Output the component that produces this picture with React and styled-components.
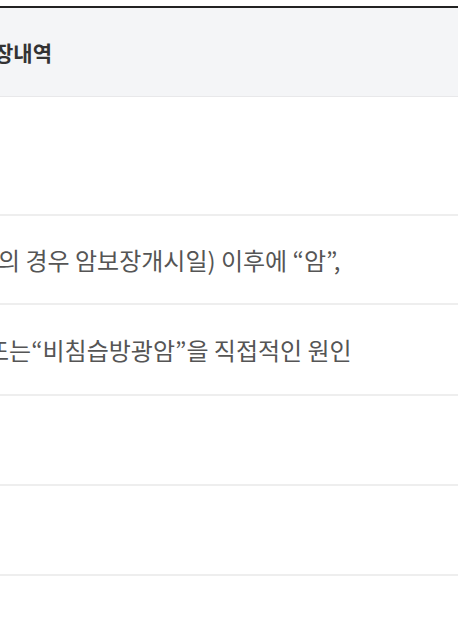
import React from 'react'
import styled, { createGlobalStyle } from 'styled-components'

const GlobalStyle = createGlobalStyle`
    html, body {
        margin: 0;
        padding: 0;
        background: #ffffff;
    }
    body {
        font-family: "Noto Sans CJK KR", "Noto Sans", sans-serif;
        overflow: hidden;
    }
`;

// the table is scrolled sideways, so each text starts cut at the left edge
const rows = [
    { text: '', offset: 0, height: 117 },
    { text: '의 경우 암보장개시일) 이후에 “암”,', offset: -2, height: 87 },
    { text: '또는“비침습방광암”을 직접적인 원인', offset: -13, height: 89 },
    { text: '', offset: 0, height: 88 },
    { text: '', offset: 0, height: 88 },
    { text: '', offset: 0, height: 88 },
];

const App = () => {
    return (
        <Wrapper>
            <GlobalStyle />
            <Table>
                <Head>
                    <HeadCell offset={-6}>장내역</HeadCell>
                </Head>
                {rows.map((row, i) => (
                    <Row key={i} height={row.height}>
                        <Cell offset={row.offset}>{row.text}</Cell>
                    </Row>
                ))}
            </Table>
        </Wrapper>
    )
}

const Wrapper = styled.div`
    width: 458px;
    height: 644px;
    padding-top: 6px;
    box-sizing: border-box;
    overflow: hidden;
`;

const Table = styled.div`
    border-top: 2px solid #222222;
    display: flex;
    flex-direction: column;
`;

const Head = styled.div`
    height: 88px;
    background: #f4f5f7;
    border-bottom: 1px solid #e8e8ea;
    display: flex;
    align-items: center;
    overflow: hidden;
`;

const HeadCell = styled.span`
    margin-left: ${({ offset }) => offset}px;
    font-size: 21px;
    font-weight: 700;
    color: #333333;
    white-space: nowrap;
`;

const Row = styled.div`
    height: ${({ height }) => height}px;
    border-bottom: 2px solid #eeeeee;
    display: flex;
    align-items: center;
    overflow: hidden;
    flex-shrink: 0;
`;

const Cell = styled.span`
    margin-left: ${({ offset }) => offset}px;
    font-size: 24px;
    color: #555555;
    white-space: nowrap;
`;

export default App
